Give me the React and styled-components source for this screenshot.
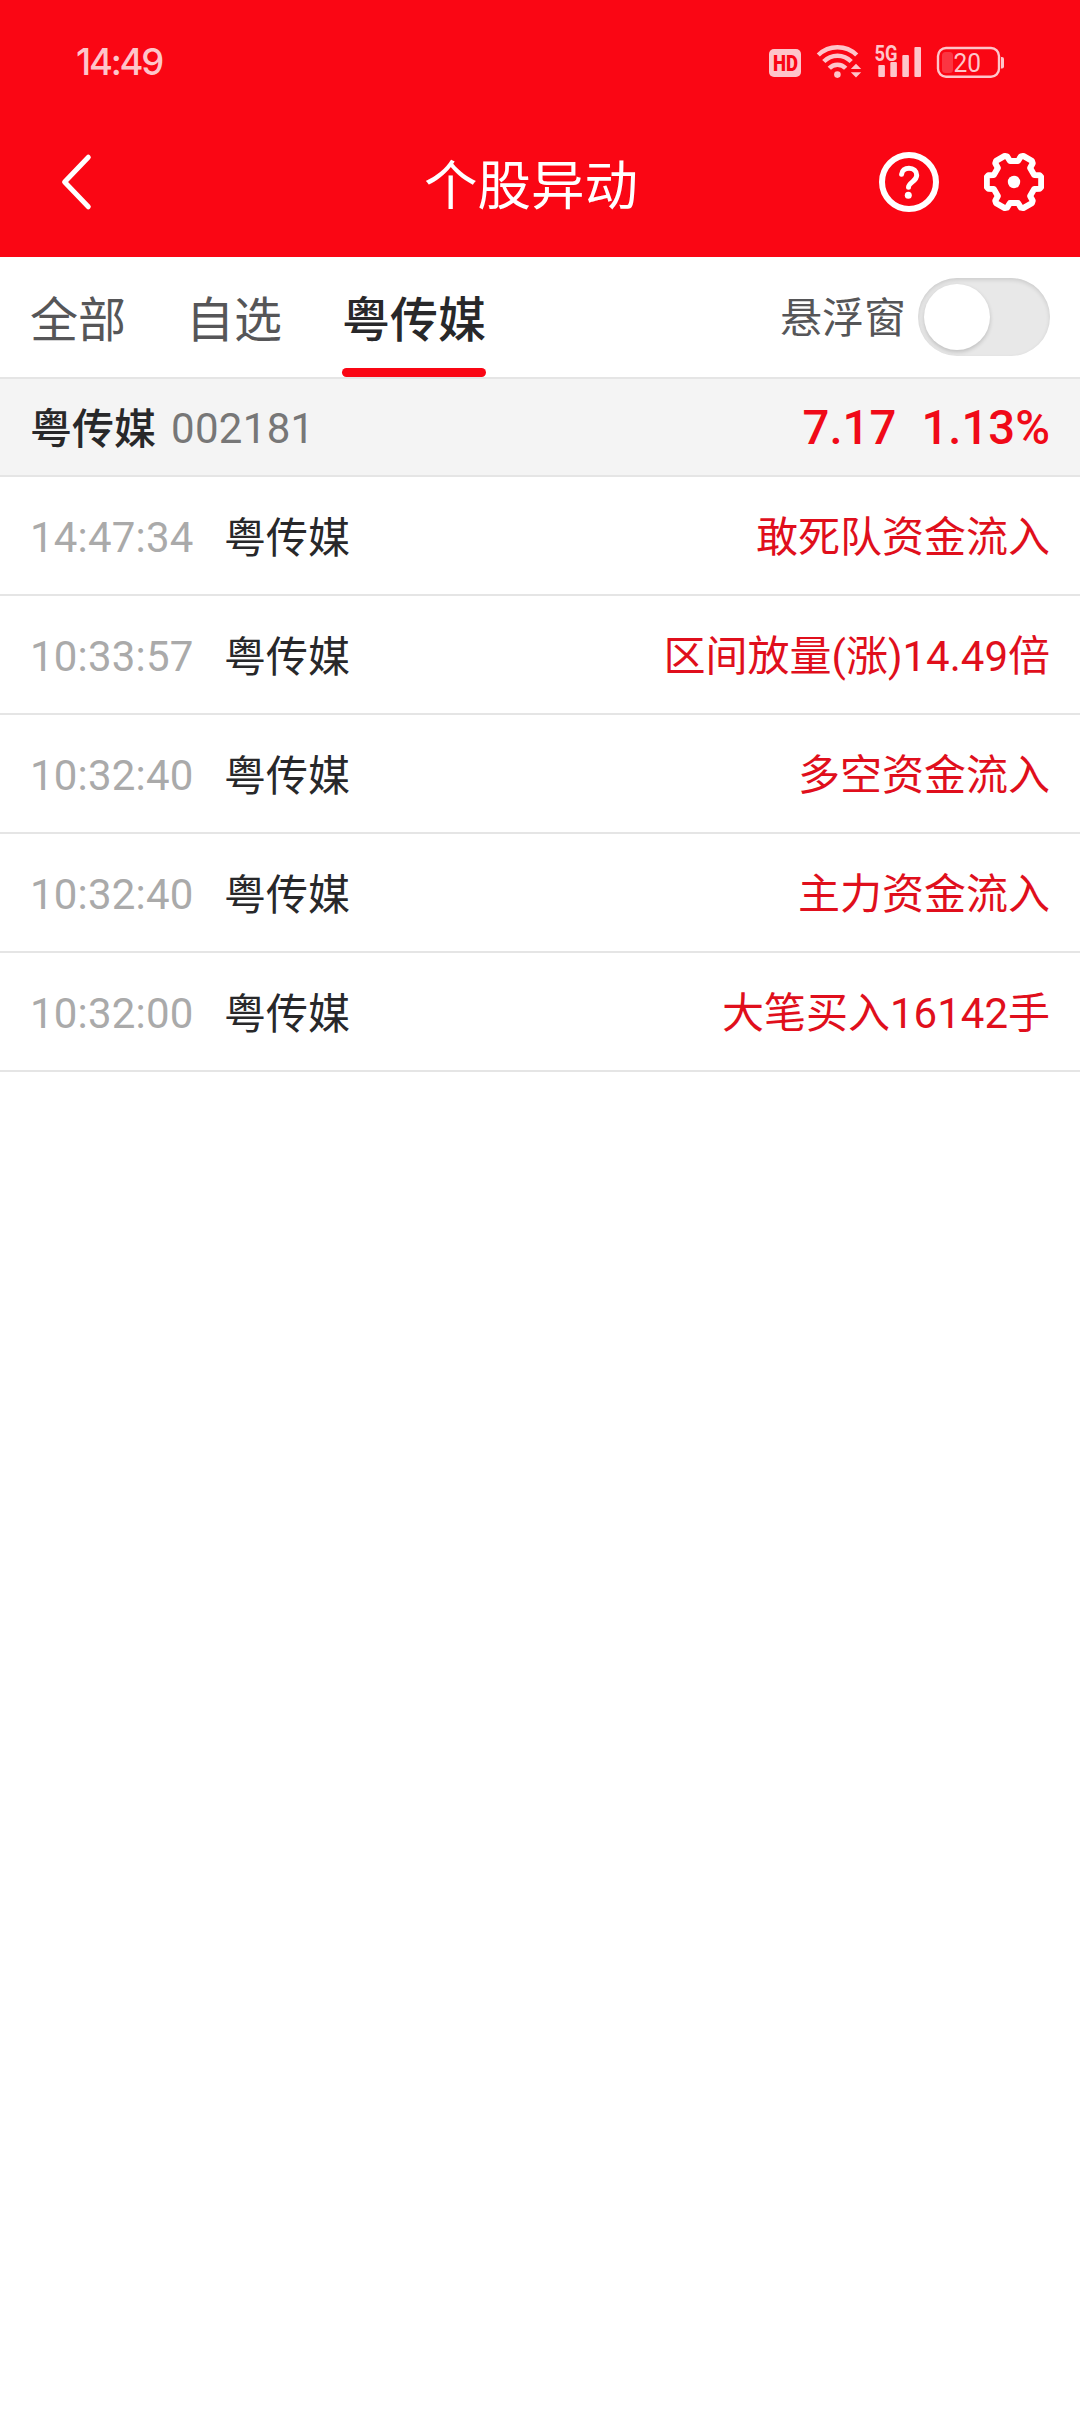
import React, { useState } from 'react';
import styled, { createGlobalStyle, ThemeProvider } from 'styled-components';

const theme = {
	primaryColor: '#fa0614',
	statusColor: '#fec5ca',
	riseColor: '#e00f1c',
	textDark: '#28282a',
	textMedium: '#565658',
	textCode: '#777777',
	textLight: '#aaaaaa',
	lineColor: '#e5e5e5',
	panelColor: '#f4f4f4',
	fontMain: "Roboto, 'Noto Sans CJK SC', sans-serif",
	fontSizeM: '42px',
	fontSizeL: '48px',
	indent: '30px',
};

const GlobalStyle = createGlobalStyle`
	* {
		box-sizing: border-box;
	}

	body {
		margin: 0;
		background-color: #fff;
	}
`;

const AppStyle = styled.main`
	width: 1080px;
	min-height: 2412px;
	background-color: #fff;
	font-family: ${({ theme }) => theme.fontMain};
	font-size: ${({ theme }) => theme.fontSizeM};
	line-height: 1;
	white-space: nowrap;
`;

const TopSection = styled.header`
	background-color: ${({ theme }) => theme.primaryColor};
	height: 257px;
`;

const StatusBar = styled.div`
	display: flex;
	align-items: center;
	justify-content: space-between;
	height: 126px;
	padding: 0 76px;
	color: ${({ theme }) => theme.statusColor};
`;

const Clock = styled.span`
	padding-bottom: 2px;
	font-family: Inter, sans-serif;
	font-size: 36.5px;
	font-weight: 500;
	letter-spacing: -2.2px;
`;

const StatusIcons = styled.svg`
	display: block;
	width: 236px;
	height: 60px;
`;

const NavBar = styled.nav`
	display: grid;
	grid-template-columns: 200px 1fr 200px;
	align-items: center;
	height: 112px;
	padding: 0 36px 0 16px;
`;

const IconButton = styled.button`
	display: block;
	width: 60px;
	height: 60px;
	padding: 0;
	border: 0;
	background: none;
	color: #fff;

	svg {
		display: block;
		width: 100%;
		height: 100%;
	}
`;

const BackButton = styled(IconButton)`
	margin-left: 30px;
`;

const NavActions = styled.div`
	display: flex;
	justify-content: flex-end;
	gap: 45px;
`;

const Title = styled.h1`
	margin: 0;
	padding: 10px 0 0 2px;
	font-size: 53.5px;
	font-weight: 400;
	text-align: center;
	color: #fff;
`;

const TabBar = styled.section`
	display: flex;
	align-items: center;
	justify-content: space-between;
	height: 122px;
	padding: 0 ${({ theme }) => theme.indent};
	border-bottom: 2px solid ${({ theme }) => theme.lineColor};
`;

const TabList = styled.div`
	display: flex;
	align-self: stretch;
	gap: 60px;
`;

const Tab = styled.button`
	display: flex;
	flex-direction: column;
	justify-content: space-between;
	padding: 40px 0 0;
	border: 0;
	background: none;
	font-family: inherit;
	font-size: ${({ theme }) => theme.fontSizeL};
	font-weight: ${({ $active }) => ($active ? 500 : 400)};
	line-height: 1;
	color: ${({ theme, $active }) =>
		$active ? theme.textDark : theme.textMedium};

	&::after {
		content: '';
		width: 100%;
		height: 9px;
		border-radius: 5px;
		background-color: ${({ theme, $active }) =>
			$active ? theme.primaryColor : 'transparent'};
	}
`;

const FloatSetting = styled.label`
	display: flex;
	align-items: center;
	gap: 12px;
	color: ${({ theme }) => theme.textMedium};
`;

const FloatLabel = styled.span`
	padding-top: 4px;
`;

const Switch = styled.button`
	display: flex;
	justify-content: ${({ $on }) => ($on ? 'flex-end' : 'flex-start')};
	width: 132px;
	height: 78px;
	padding: 6px;
	border: 0;
	border-radius: 39px;
	background-color: ${({ theme, $on }) =>
		$on ? theme.primaryColor : '#e8e8e8'};
	box-shadow: inset 0 2px 4px rgba(0, 0, 0, 0.12);
`;

const SwitchKnob = styled.span`
	width: 66px;
	height: 66px;
	border-radius: 50%;
	background-color: #fff;
	box-shadow: 0 2px 4px rgba(0, 0, 0, 0.18);
`;

const StockSummary = styled.section`
	display: flex;
	align-items: center;
	height: 98px;
	padding: 3px ${({ theme }) => theme.indent} 0;
	border-bottom: 2px solid ${({ theme }) => theme.lineColor};
	background-color: ${({ theme }) => theme.panelColor};
`;

const SummaryName = styled.span`
	padding-top: 2px;
	font-weight: 500;
	color: ${({ theme }) => theme.textDark};
`;

const SummaryCode = styled.span`
	margin-left: 15px;
	letter-spacing: 0.3px;
	color: ${({ theme }) => theme.textCode};
`;

const Quote = styled.div`
	display: flex;
	gap: 25px;
	margin-left: auto;
	font-size: 47.3px;
	font-weight: 500;
	color: #f00a18;
`;

const AlertList = styled.ul`
	margin: 0;
	padding: 0;
	list-style-type: none;
`;

const AlertItem = styled.li`
	display: flex;
	align-items: center;
	height: 119px;
	padding: 4px ${({ theme }) => theme.indent} 0;
	border-bottom: 2px solid ${({ theme }) => theme.lineColor};
`;

const AlertTime = styled.time`
	width: 194px;
	letter-spacing: 0.2px;
	color: ${({ theme }) => theme.textLight};
`;

const AlertName = styled.span`
	padding-top: 2px;
	color: ${({ theme }) => theme.textDark};
`;

const AlertEvent = styled.span`
	margin-left: auto;
	padding-top: 1px;
	color: ${({ theme }) => theme.riseColor};
`;

const tabs = ['全部', '自选', '粤传媒'];

const alerts = [
	{ time: '14:47:34', name: '粤传媒', event: '敢死队资金流入' },
	{ time: '10:33:57', name: '粤传媒', event: '区间放量(涨)14.49倍' },
	{ time: '10:32:40', name: '粤传媒', event: '多空资金流入' },
	{ time: '10:32:40', name: '粤传媒', event: '主力资金流入' },
	{ time: '10:32:00', name: '粤传媒', event: '大笔买入16142手' },
];

// one tooth of the gear, repeated every 60 degrees
const gearPoints = [0, 60, 120, 180, 240, 300]
	.flatMap((deg) =>
		[
			[20.2, -7],
			[25.6, -6.8],
			[27.2, -5],
			[27.2, 5],
			[25.6, 6.8],
			[20.2, 7],
		].map(([x, y]) => {
			const a = (deg * Math.PI) / 180;
			return [
				x * Math.cos(a) - y * Math.sin(a),
				x * Math.sin(a) + y * Math.cos(a),
			]
				.map((n) => n.toFixed(2))
				.join(',');
		})
	)
	.join(' ');

const BackIcon = () => (
	<svg viewBox='0 0 60 60' fill='none' stroke='currentColor'>
		<path
			d='M42.3 5.2 18.6 30 42.3 54.8'
			strokeWidth='5'
			strokeLinecap='round'
			strokeLinejoin='round'
		/>
	</svg>
);

const HelpIcon = () => (
	<svg viewBox='0 0 60 60' fill='none' stroke='currentColor'>
		<circle cx='30' cy='30' r='27' strokeWidth='6' />
		<path
			d='M22.6 22.2C23 18.500 26 16.200 30 16.200c4.400 0 7.700 2.900 7.700 7 0 2.700-1.400 4.300-4 6.400-2.800 2.300-4.200 3.600-4.200 5.600'
			strokeWidth='5'
			strokeLinecap='round'
		/>
		<circle cx='29.300' cy='43.300' r='3.500' fill='currentColor' stroke='none' />
	</svg>
);

const GearIcon = () => (
	<svg viewBox='-30 -30 60 60' fill='none' stroke='currentColor'>
		<polygon points={gearPoints} strokeWidth='6' strokeLinejoin='round' />
		<circle r='6.2' fill='currentColor' stroke='none' />
	</svg>
);

const PhoneStatus = () => (
	<StatusIcons viewBox='768 33 236 60' fill='currentColor'>
		<rect x='769' y='49' width='32' height='28' rx='5' />
		<text
			x='773'
			y='70.700'
			fontFamily='Roboto, sans-serif'
			fontSize='21.500'
			fontWeight='900'
			textLength='25'
			lengthAdjust='spacingAndGlyphs'
			fill={theme.primaryColor}
		>
			HD
		</text>
		<g fill='none' stroke='currentColor' strokeWidth='4.500'>
			<path d='M818.300 55A27.600 27.600 0 0 1 856.700 55' />
			<path d='M823.800 61.500A19 19 0 0 1 851.200 61.500' />
			<path d='M829.300 68.200A11.200 11.200 0 0 1 845.700 68.200' />
		</g>
		<circle cx='837.400' cy='74.600' r='3.300' />
		<path d='M856 63.700l5.200 5.300h-10.400zM856 77.500l5.200-5.300h-10.400z' />
		<text
			x='874.500'
			y='60.500'
			fontFamily='Roboto, sans-serif'
			fontSize='21.500'
			fontWeight='700'
			textLength='23'
			lengthAdjust='spacingAndGlyphs'
		>
			5G
		</text>
		<rect x='878.300' y='65' width='6.600' height='12' rx='1' />
		<rect x='890.300' y='62' width='6.600' height='15' rx='1' />
		<rect x='902.300' y='55' width='6.600' height='22' rx='1' />
		<rect x='914.400' y='47' width='6.600' height='30' rx='1' />
		<rect
			x='938'
			y='48'
			width='61'
			height='28.700'
			rx='8'
			fill='none'
			stroke='currentColor'
			strokeWidth='2.400'
		/>
		<rect x='942' y='52' width='11' height='21' rx='3.500' opacity='0.250' />
		<text
			x='953.500'
			y='72'
			fontFamily='Roboto, sans-serif'
			fontSize='25.500'
			textLength='27.500'
			lengthAdjust='spacingAndGlyphs'
		>
			20
		</text>
		<path d='M1001 57h1a2 2 0 0 1 2 2v7.500a2 2 0 0 1-2 2h-1z' />
	</StatusIcons>
);

const App = () => {
	const [activeTab, setActiveTab] = useState(2);
	const [floating, setFloating] = useState(false);

	return (
		<ThemeProvider theme={theme}>
			<GlobalStyle />
			<AppStyle>
				<TopSection>
					<StatusBar>
						<Clock>14:49</Clock>
						<PhoneStatus />
					</StatusBar>
					<NavBar>
						<BackButton>
							<BackIcon />
						</BackButton>
						<Title>个股异动</Title>
						<NavActions>
							<IconButton>
								<HelpIcon />
							</IconButton>
							<IconButton>
								<GearIcon />
							</IconButton>
						</NavActions>
					</NavBar>
				</TopSection>
				<TabBar>
					<TabList>
						{tabs.map((tab, index) => (
							<Tab
								key={tab}
								$active={index === activeTab}
								onClick={() => setActiveTab(index)}
							>
								{tab}
							</Tab>
						))}
					</TabList>
					<FloatSetting>
						<FloatLabel>悬浮窗</FloatLabel>
						<Switch $on={floating} onClick={() => setFloating(!floating)}>
							<SwitchKnob />
						</Switch>
					</FloatSetting>
				</TabBar>
				<StockSummary>
					<SummaryName>粤传媒</SummaryName>
					<SummaryCode>002181</SummaryCode>
					<Quote>
						<span>7.17</span>
						<span>1.13%</span>
					</Quote>
				</StockSummary>
				<AlertList>
					{alerts.map((alert, index) => (
						<AlertItem key={index}>
							<AlertTime>{alert.time}</AlertTime>
							<AlertName>{alert.name}</AlertName>
							<AlertEvent>{alert.event}</AlertEvent>
						</AlertItem>
					))}
				</AlertList>
			</AppStyle>
		</ThemeProvider>
	);
};

export default App;
